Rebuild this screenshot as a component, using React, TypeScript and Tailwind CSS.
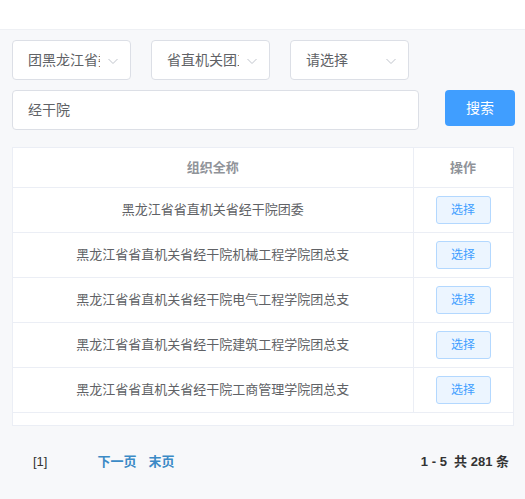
import React from 'react';

const rows = [
    '黑龙江省省直机关省经干院团委',
    '黑龙江省省直机关省经干院机械工程学院团总支',
    '黑龙江省省直机关省经干院电气工程学院团总支',
    '黑龙江省省直机关省经干院建筑工程学院团总支',
    '黑龙江省省直机关省经干院工商管理学院团总支',
];

function Chevron() {
    return (
        <svg width="12" height="12" viewBox="0 0 12 12" className="absolute right-[11px] top-[14px]">
            <polyline points="1.5,4 6,8.5 10.5,4" fill="none" stroke="#c0c4cc" strokeWidth="1" />
        </svg>
    );
}

function Select({ label }: { label: string }) {
    return (
        <div className="relative shrink-0 w-[119px] h-[40px] bg-white border border-[#dcdfe6] rounded-[4px]">
            <div className="pl-[15px] pr-[30px] h-full flex items-center">
                <span className="block overflow-hidden whitespace-nowrap text-[14px] text-[#606266]">{label}</span>
            </div>
            <Chevron />
        </div>
    );
}

export default function App() {
    const font = { fontFamily: '"Helvetica Neue", "Liberation Sans", "Noto Sans CJK SC", sans-serif' };
    return (
        <div className="w-[525px] h-[499px] bg-[#f7f8fa] overflow-hidden" style={font}>
            {/* top bar */}
            <div className="h-[30px] bg-white border-b border-[#eef0f4]" />

            <div className="px-[12px] pt-[10px]">
                {/* filters */}
                <div className="flex gap-[20px]">
                    <Select label="团黑龙江省委" />
                    <Select label="省直机关团工委" />
                    <Select label="请选择" />
                </div>

                <div className="flex items-start mt-[10px]">
                    <div className="shrink-0 w-[407px] h-[40px] bg-white border border-[#dcdfe6] rounded-[4px] flex items-center pl-[15px] text-[14px] text-[#606266]">
                        经干院
                    </div>
                    <button className="shrink-0 ml-[26px] w-[70px] h-[36px] bg-[#409eff] text-white text-[14px] rounded-[4px]">
                        搜索
                    </button>
                </div>

                {/* table */}
                <div className="mt-[17px] w-[502px] h-[279px] bg-white border border-[#ebeef5]">
                    <table className="w-[500px] border-collapse table-fixed text-[13px]">
                        <colgroup>
                            <col className="w-[400px]" />
                            <col className="w-[100px]" />
                        </colgroup>
                        <thead>
                            <tr className="h-[39px] text-[#909399] font-bold">
                                <th className="border-b border-r border-[#ebeef5] text-center font-bold">组织全称</th>
                                <th className="border-b border-r border-[#ebeef5] text-center font-bold">操作</th>
                            </tr>
                        </thead>
                        <tbody>
                            {rows.map((r) => (
                                <tr key={r} className="h-[45px] text-[#606266]">
                                    <td className="border-b border-r border-[#ebeef5] text-center">{r}</td>
                                    <td className="border-b border-r border-[#ebeef5]">
                                        <div className="flex justify-center">
                                            <button className="w-[55px] h-[28px] bg-[#ecf5ff] border border-[#b3d8ff] text-[#409eff] text-[12px] rounded-[3px]">
                                                选择
                                            </button>
                                        </div>
                                    </td>
                                </tr>
                            ))}
                        </tbody>
                    </table>
                </div>

                {/* pagination */}
                <div className="mt-[26px] h-[20px] flex items-center text-[13px] leading-5" style={{ fontFamily: '"Liberation Sans", "Noto Sans CJK SC", sans-serif' }}>
                    <span className="ml-[21px] text-[#333]">[1]</span>
                    <span className="ml-[50px] text-[#3b8ac6] font-bold">下一页</span>
                    <span className="ml-[12px] text-[#3b8ac6] font-bold">末页</span>
                    <span className="ml-auto mr-[4px] text-[#333] font-bold">1 - 5&nbsp; 共 281 条</span>
                </div>
            </div>
        </div>
    );
}
